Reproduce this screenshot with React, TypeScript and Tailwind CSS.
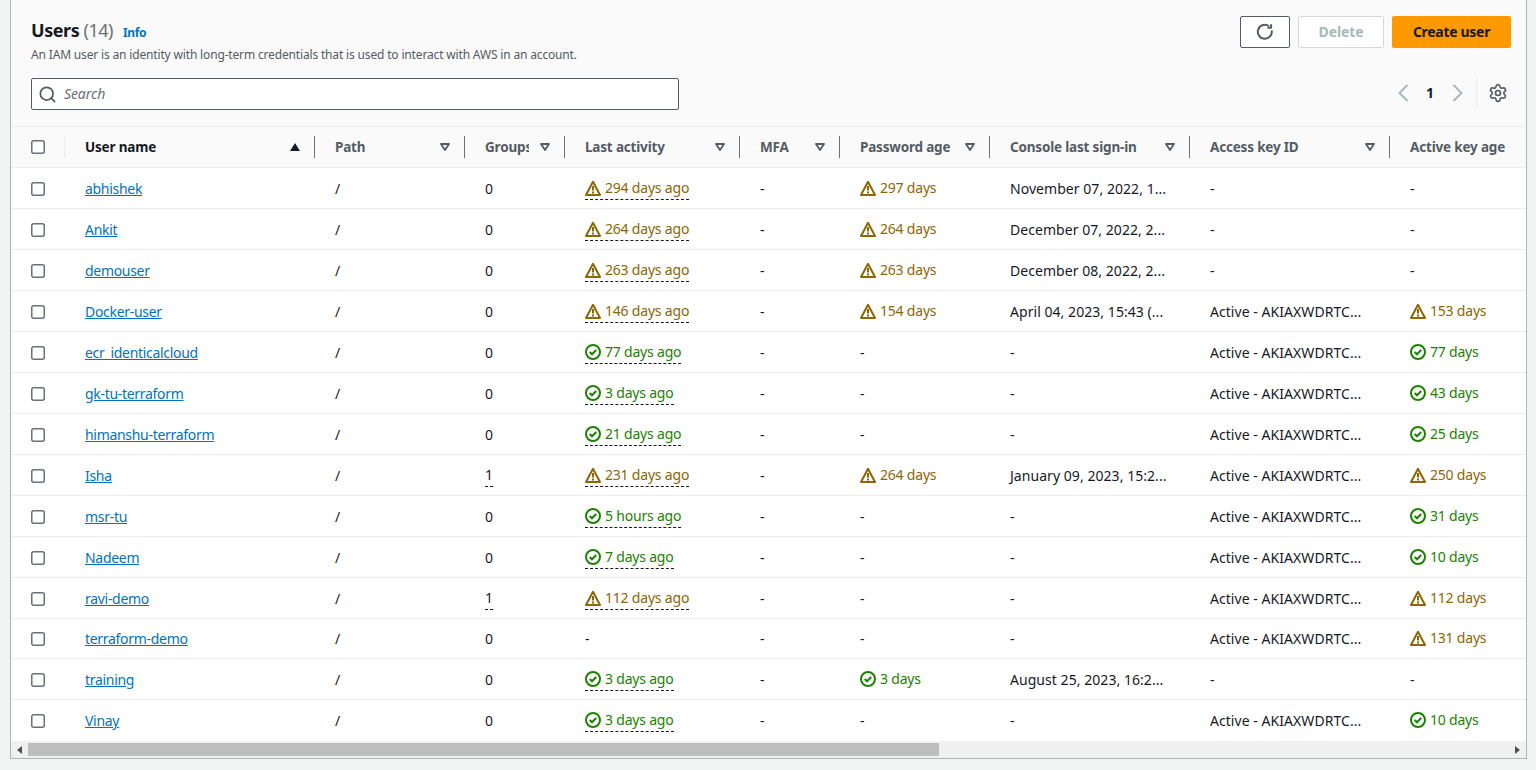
import { Search, Settings } from "lucide-react";

type Status = "warn" | "ok" | null;

interface UserRow {
  name: string;
  groups: string;
  activity: [Status, string];
  pwAge: [Status, string];
  signIn: string;
  accessKey: string;
  keyAge: [Status, string];
  short?: boolean;
}

const KEY = "Active - AKIAXWDRTC...";

const users: UserRow[] = [
  { name: "abhishek", groups: "0", activity: ["warn", "294 days ago"], pwAge: ["warn", "297 days"], signIn: "November 07, 2022, 1...", accessKey: "-", keyAge: [null, "-"] },
  { name: "Ankit", groups: "0", activity: ["warn", "264 days ago"], pwAge: ["warn", "264 days"], signIn: "December 07, 2022, 2...", accessKey: "-", keyAge: [null, "-"] },
  { name: "demouser", groups: "0", activity: ["warn", "263 days ago"], pwAge: ["warn", "263 days"], signIn: "December 08, 2022, 2...", accessKey: "-", keyAge: [null, "-"] },
  { name: "Docker-user", groups: "0", activity: ["warn", "146 days ago"], pwAge: ["warn", "154 days"], signIn: "April 04, 2023, 15:43 (...", accessKey: KEY, keyAge: ["warn", "153 days"] },
  { name: "ecr_identicalcloud", groups: "0", activity: ["ok", "77 days ago"], pwAge: [null, "-"], signIn: "-", accessKey: KEY, keyAge: ["ok", "77 days"] },
  { name: "gk-tu-terraform", groups: "0", activity: ["ok", "3 days ago"], pwAge: [null, "-"], signIn: "-", accessKey: KEY, keyAge: ["ok", "43 days"] },
  { name: "himanshu-terraform", groups: "0", activity: ["ok", "21 days ago"], pwAge: [null, "-"], signIn: "-", accessKey: KEY, keyAge: ["ok", "25 days"] },
  { name: "Isha", groups: "1", activity: ["warn", "231 days ago"], pwAge: ["warn", "264 days"], signIn: "January 09, 2023, 15:2...", accessKey: KEY, keyAge: ["warn", "250 days"] },
  { name: "msr-tu", groups: "0", activity: ["ok", "5 hours ago"], pwAge: [null, "-"], signIn: "-", accessKey: KEY, keyAge: ["ok", "31 days"] },
  { name: "Nadeem", groups: "0", activity: ["ok", "7 days ago"], pwAge: [null, "-"], signIn: "-", accessKey: KEY, keyAge: ["ok", "10 days"] },
  { name: "ravi-demo", groups: "1", activity: ["warn", "112 days ago"], pwAge: [null, "-"], signIn: "-", accessKey: KEY, keyAge: ["warn", "112 days"] },
  { name: "terraform-demo", groups: "0", activity: [null, "-"], pwAge: [null, "-"], signIn: "-", accessKey: KEY, keyAge: ["warn", "131 days"], short: true },
  { name: "training", groups: "0", activity: ["ok", "3 days ago"], pwAge: ["ok", "3 days"], signIn: "August 25, 2023, 16:2...", accessKey: "-", keyAge: [null, "-"] },
  { name: "Vinay", groups: "0", activity: ["ok", "3 days ago"], pwAge: [null, "-"], signIn: "-", accessKey: KEY, keyAge: ["ok", "10 days"] },
];

function WarnIcon() {
  return (
    <svg viewBox="0 0 16 16" className="w-4 h-4 shrink-0" fill="none" stroke="#8d6605" strokeWidth="2">
      <path d="M8 1.8 L15 15 H1 Z" strokeLinejoin="round" />
      <path d="M8 6v4.5M8 11.5v2" />
    </svg>
  );
}

function OkIcon() {
  return (
    <svg viewBox="0 0 16 16" className="w-4 h-4 shrink-0" fill="none" stroke="#1d8102" strokeWidth="2">
      <circle cx="8" cy="8" r="7" />
      <path d="M4.7 8l2.3 2.3 4.2-4.3" />
    </svg>
  );
}

function StatusText({ value }: { value: [Status, string] }) {
  const [status, text] = value;
  if (!status) return <span>{text}</span>;
  return (
    <span className={`inline-flex items-center gap-1 tracking-[-0.2px] ${status === "warn" ? "text-[#8d6605]" : "text-[#1d8102]"}`}>
      {status === "warn" ? <WarnIcon /> : <OkIcon />}
      {text}
    </span>
  );
}

function Dashed({ children }: { children: React.ReactNode }) {
  return <span className="inline-flex leading-5 pb-px border-b border-dashed border-[#16191f]">{children}</span>;
}

function Checkbox() {
  return (
    <svg viewBox="0 0 14 14" className="w-3.5 h-3.5 shrink-0 block">
      <rect x="0.75" y="0.75" width="12.5" height="12.5" rx="2" fill="#fff" stroke="#687078" strokeWidth="1.5" />
    </svg>
  );
}

function HeaderCell({ label, width, sorted }: { label: string; width: string; sorted?: boolean }) {
  return (
    <div className={`${width} shrink-0 h-full flex items-center justify-between pl-5 pr-[15px] relative`}>
      <span className={`overflow-hidden whitespace-nowrap font-bold text-[13.5px] tracking-[-0.18px] ${sorted ? "text-[#16191f]" : "text-[#545b64]"} ${label === "Groups" ? "w-[44px]" : ""}`}>
        {label}
      </span>
      {label !== "Active key age" &&
        (sorted ? (
          <svg viewBox="0 0 10 8" className="w-2.5 h-2 shrink-0">
            <path d="M5 0L10 8H0z" fill="#16191f" />
          </svg>
        ) : (
          <svg viewBox="0 0 10 8" className="w-2.5 h-2 shrink-0">
            <path d="M1 1h8L5 7z" fill="none" stroke="#545b64" strokeWidth="1.8" strokeLinejoin="round" />
          </svg>
        ))}
      {label !== "Active key age" && <div className="absolute right-0 top-[9px] w-px h-[22px] bg-[#687078]" />}
    </div>
  );
}

function Row({ user, last }: { user: UserRow; last: boolean }) {
  return (
    <div className={`flex items-center text-sm text-[#16191f] bg-white border-b ${user.short ? "h-10 pt-px" : "h-[41px] pt-0.5"} ${last ? "border-white" : "border-[#eaeded]"}`}>
      <div className="w-[54px] shrink-0 pl-5">
        <Checkbox />
      </div>
      <div className="w-[250px] shrink-0 pl-5">
        <a className="text-[#0073bb] underline tracking-[-0.3px]">{user.name}</a>
      </div>
      <div className="w-[150px] shrink-0 pl-5">/</div>
      <div className="w-[100px] shrink-0 pl-5 flex">{user.groups === "1" ? <Dashed>1</Dashed> : user.groups}</div>
      <div className="w-[175px] shrink-0 pl-5 flex">
        {user.activity[0] ? (
          <Dashed>
            <StatusText value={user.activity} />
          </Dashed>
        ) : (
          "-"
        )}
      </div>
      <div className="w-[100px] shrink-0 pl-5">-</div>
      <div className="w-[150px] shrink-0 pl-5">
        <StatusText value={user.pwAge} />
      </div>
      <div className="w-[200px] shrink-0 pl-5 whitespace-nowrap tracking-[0.05px]">{user.signIn}</div>
      <div className="w-[200px] shrink-0 pl-5 whitespace-nowrap tracking-[0.05px]">{user.accessKey}</div>
      <div className="w-[136px] shrink-0 pl-5 whitespace-nowrap">
        <StatusText value={user.keyAge} />
      </div>
    </div>
  );
}

export default function App() {
  return (
    <div className="h-[770px] bg-[#f2f3f3] pl-2.5 pr-[9px] overflow-hidden" style={{ fontFamily: '"Noto Sans", Arial, sans-serif' }}>
      <div className="h-[759px] border-l border-r border-b border-[#aab7b8] bg-[#fafafa] flex flex-col overflow-hidden">
        <div className="h-[127px] flex justify-between pl-5 pr-[15px] pt-4 border-b border-[#eaeded] shrink-0">
          <div className="w-[648px]">
            <div className="flex items-baseline gap-2.5 h-[30px]">
              <h1 className="text-lg font-bold tracking-[-0.45px] text-[#16191f]">
                Users <span className="font-normal text-[#687078]">(14)</span>
              </h1>
              <a className="text-xs font-bold tracking-[-0.35px] text-[#0073bb]">Info</a>
            </div>
            <p className="text-xs tracking-[-0.16px] text-[#545b64] mt-px">An IAM user is an identity with long-term credentials that is used to interact with AWS in an account.</p>
            <div className="mt-[15px] h-8 border border-[#545b64] rounded-[2px] bg-white flex items-center pl-1.5 gap-[7px]">
              <Search size={19} strokeWidth={2.2} className="text-[#545b64]" />
              <span className="text-sm italic tracking-[-0.1px] text-[#687078]">Search</span>
            </div>
          </div>
          <div className="flex flex-col items-end">
            <div className="flex gap-2">
              <button className="w-[50px] h-8 border border-[#545b64] rounded-[2px] bg-white flex items-center justify-center">
                <svg viewBox="0 0 16 16" className="w-[18px] h-[18px]" fill="none" stroke="#545b64" strokeWidth="1.8">
                  <path d="M13.9 6.6A6.2 6.2 0 1 1 11.6 2.9" />
                  <path d="M11.8 0.4v3.2H8.6" strokeLinejoin="round" transform="translate(1.6 0.6)" />
                </svg>
              </button>
              <button className="w-[86px] h-8 border border-[#d5dbdb] rounded-[2px] bg-white text-sm font-bold tracking-[-0.1px] text-[#aab7b8]">Delete</button>
              <button className="w-[119px] h-8 rounded-[2px] bg-[#ff9900] text-sm font-bold tracking-[-0.3px] text-[#16191f]">Create user</button>
            </div>
            <div className="flex items-center mt-[29px] h-8 pr-[3px]">
              <svg viewBox="0 0 12 18" className="w-3 h-[18px]" fill="none" stroke="#aab7b8" strokeWidth="2">
                <path d="M10.5 1L2.5 9l8 8" />
              </svg>
              <span className="text-sm font-bold text-[#16191f] ml-[17px] mr-[18px]">1</span>
              <svg viewBox="0 0 12 18" className="w-3 h-[18px]" fill="none" stroke="#aab7b8" strokeWidth="2">
                <path d="M1.5 1l8 8-8 8" />
              </svg>
              <div className="w-px h-8 bg-[#eaeded] ml-3 mr-[11px]" />
              <Settings size={20} strokeWidth={2} className="text-[#545b64]" />
            </div>
          </div>
        </div>
        <div className="h-[41px] flex items-center border-b border-[#eaeded] shrink-0">
          <div className="w-[54px] shrink-0 h-full pl-5 flex items-center relative">
            <Checkbox />
            <div className="absolute right-0 top-[9px] w-px h-[22px] bg-[#eaeded]" />
          </div>
          <HeaderCell label="User name" width="w-[250px]" sorted />
          <HeaderCell label="Path" width="w-[150px]" />
          <HeaderCell label="Groups" width="w-[100px]" />
          <HeaderCell label="Last activity" width="w-[175px]" />
          <HeaderCell label="MFA" width="w-[100px]" />
          <HeaderCell label="Password age" width="w-[150px]" />
          <HeaderCell label="Console last sign-in" width="w-[200px]" />
          <HeaderCell label="Access key ID" width="w-[200px]" />
          <HeaderCell label="Active key age" width="w-[136px]" />
        </div>
        <div>
          {users.map((u, i) => (
            <Row key={u.name} user={u} last={i === users.length - 1} />
          ))}
        </div>
        <div className="h-[17px] flex items-center bg-[#f0f0f0] shrink-0">
          <div className="w-[17px] flex justify-center">
            <div className="w-0 h-0 border-y-4 border-y-transparent border-r-[5px] border-r-[#505050]" />
          </div>
          <div className="w-[911px] h-[13px] bg-[#bdbdbd]" />
          <div className="flex-1" />
          <div className="w-[17px] flex justify-center">
            <div className="w-0 h-0 border-y-4 border-y-transparent border-l-[5px] border-l-[#505050]" />
          </div>
        </div>
      </div>
    </div>
  );
}
